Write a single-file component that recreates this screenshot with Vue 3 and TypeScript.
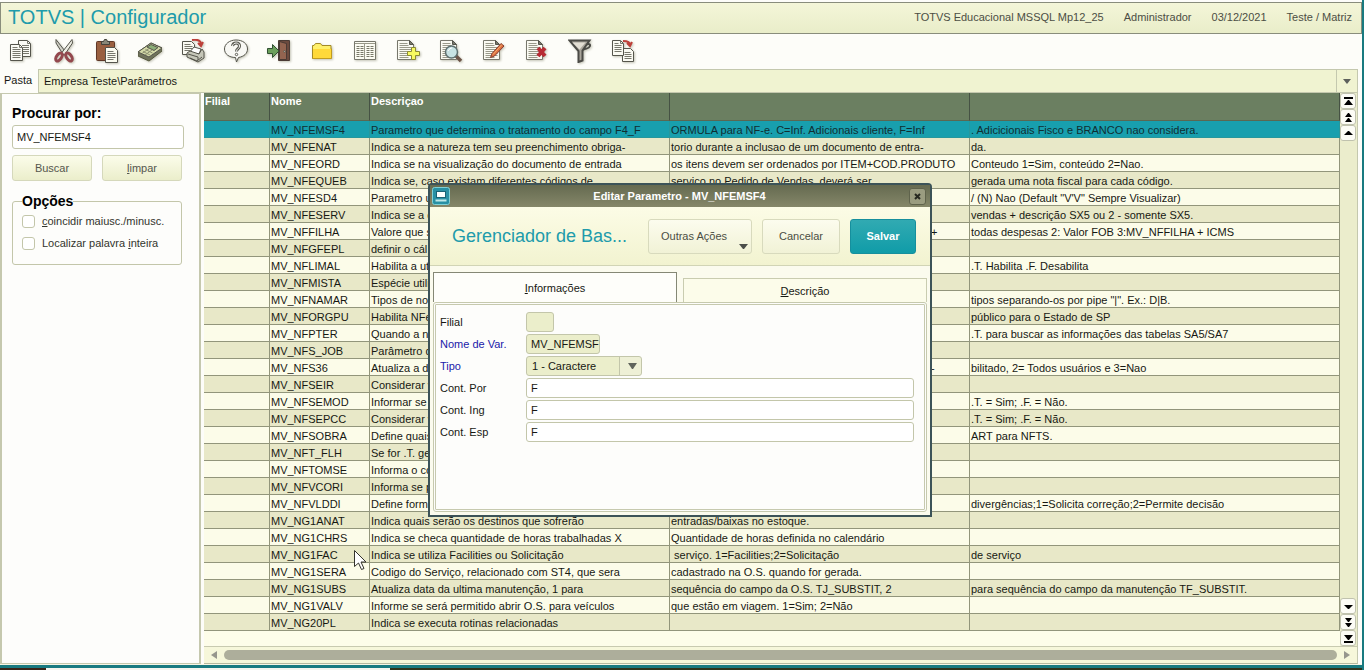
<script setup lang="ts">
import { ref } from 'vue'

interface Row {
  name: string
  desc: string
  desc2: string
  desc3: string
  tail?: boolean
}

const r = (name: string, desc: string, desc2 = '', desc3 = '', tail = false): Row => ({ name, desc, desc2, desc3, tail })

const rows: Row[] = [
  r('MV_NFEMSF4', 'Parametro que determina o tratamento do campo F4_F', 'ORMULA para NF-e. C=Inf. Adicionais cliente, F=Inf', '. Adicicionais Fisco e BRANCO nao considera.'),
  r('MV_NFENAT', 'Indica se a natureza tem seu preenchimento obriga-', 'torio durante a inclusao de um documento de entra-', 'da.'),
  r('MV_NFEORD', 'Indica se na visualização do documento de entrada', 'os itens devem ser ordenados por ITEM+COD.PRODUTO', 'Conteudo 1=Sim, conteúdo 2=Nao.'),
  r('MV_NFEQUEB', 'Indica se, caso existam diferentes códigos de', 'serviço no Pedido de Vendas, deverá ser', 'gerada uma nota fiscal para cada código.'),
  r('MV_NFESD4', 'Parametro u', '', '/ (N) Nao (Default "V\'V" Sempre Visualizar)'),
  r('MV_NFESERV', 'Indica se a d', '', 'vendas + descrição SX5 ou 2 - somente SX5.'),
  r('MV_NFFILHA', 'Valore que s', '+', 'todas despesas 2: Valor FOB 3:MV_NFFILHA + ICMS', true),
  r('MV_NFGFEPL', 'definir o cál'),
  r('MV_NFLIMAL', 'Habilita a uti', '', '.T. Habilita .F. Desabilita'),
  r('MV_NFMISTA', 'Espécie utili'),
  r('MV_NFNAMAR', 'Tipos de not', '', 'tipos separando-os por pipe "|". Ex.: D|B.'),
  r('MV_NFORGPU', 'Habilita NFe', '', 'público para o Estado de SP'),
  r('MV_NFPTER', 'Quando a n', '', '.T. para buscar as informações das tabelas SA5/SA7'),
  r('MV_NFS_JOB', 'Parâmetro d'),
  r('MV_NFS36', 'Atualiza a d', '-', 'bilitado, 2= Todos usuários e 3=Nao', true),
  r('MV_NFSEIR', 'Considerar v'),
  r('MV_NFSEMOD', 'Informar se', '', '.T. = Sim; .F. = Não.'),
  r('MV_NFSEPCC', 'Considerar v', '', '.T. = Sim; .F. = Não.'),
  r('MV_NFSOBRA', 'Define quais', '', 'ART para NFTS.'),
  r('MV_NFT_FLH', 'Se for .T. ge'),
  r('MV_NFTOMSE', 'Informa o có'),
  r('MV_NFVCORI', 'Informa se p'),
  r('MV_NFVLDDI', 'Define form', '', 'divergências;1=Solicita correção;2=Permite decisão'),
  r('MV_NG1ANAT', 'Indica quais serão os destinos que sofrerão', 'entradas/baixas no estoque.'),
  r('MV_NG1CHRS', 'Indica se checa quantidade de horas trabalhadas X', 'Quantidade de horas definida no calendário'),
  r('MV_NG1FAC', 'Indica se utiliza Facilities ou Solicitação', '\u00a0serviço. 1=Facilities;2=Solicitação', 'de serviço'),
  r('MV_NG1SERA', 'Codigo do Serviço, relacionado com ST4, que sera', 'cadastrado na O.S. quando for gerada.'),
  r('MV_NG1SUBS', 'Atualiza data da ultima manutenção, 1 para', 'sequência do campo da O.S. TJ_SUBSTIT, 2', 'para sequência do campo da manutenção TF_SUBSTIT.'),
  r('MV_NG1VALV', 'Informe se será permitido abrir O.S. para veículos', 'que estão em viagem. 1=Sim; 2=Não'),
  r('MV_NG20PL', 'Indica se executa rotinas relacionadas'),
]

const selected = ref(0)
const search = ref('MV_NFEMSF4')
const matchCase = ref(false)
const wholeWord = ref(false)
const branch = ref('')
const variable = ref('MV_NFEMSF')
const kind = ref('1 - Caractere')
const contents = ref([
  { id: 'por', label: 'Cont. Por', value: 'F' },
  { id: 'ing', label: 'Cont. Ing', value: 'F' },
  { id: 'esp', label: 'Cont. Esp', value: 'F' },
])

const tools = ['copy', 'cut', 'paste', 'calc', 'print', 'help', 'exit', 'folder', 'grid', 'add', 'view', 'edit', 'delete', 'filter', 'export']
const pageTools = ['add', 'view', 'edit', 'delete']
</script>

<template>
  <div class="app">
    <header class="brand">
      <h1>TOTVS | Configurador</h1>
      <div class="status">
        <span>TOTVS Educacional MSSQL Mp12_25</span>
        <span>Administrador</span>
        <span>03/12/2021</span>
        <span>Teste / Matriz</span>
      </div>
    </header>

    <nav class="toolbar">
      <button v-for="t in tools" :key="t" type="button" class="tool" :aria-label="t">
        <svg viewBox="0 0 24 24" width="24" height="24" fill="none" stroke="#55554c" stroke-width="1">
          <template v-if="t === 'copy'">
            <path d="M9.500 1.500h9l3 3v13h-12z" fill="#fafaf4" />
            <path d="M18.500 1.500v3h3M13 6.500h7M13 8.500h7M13 10.500h7M13 12.500h7M13 14.500h7" stroke="#77776c" />
            <path d="M1.500 5.500h9l3 3v13h-12z" fill="#fafaf4" />
            <path d="M10.500 5.500v3h3M3.500 8.500h5M3.500 10.500h8M3.500 12.500h8M3.500 14.500h8M3.500 16.500h8M3.500 18.500h8" stroke="#77776c" />
          </template>
          <template v-else-if="t === 'cut'">
            <path d="M4 .5L14.500 14l-3 2L4 4z" fill="#d0d0c6" />
            <path d="M20 .5L9.500 14l3 2L20.500 4z" fill="#eeeee4" />
            <ellipse cx="7" cy="18" rx="2.500" ry="4.500" transform="rotate(35 7 18)" stroke="#94484e" stroke-width="3" />
            <ellipse cx="17" cy="18" rx="2.500" ry="4.500" transform="rotate(-35 17 18)" stroke="#94484e" stroke-width="3" />
          </template>
          <template v-else-if="t === 'paste'">
            <rect x="1.500" y="2.500" width="18" height="19" rx="1" fill="#9a6040" stroke="#603828" />
            <path d="M6.500 5.500v-3h2l1-2h2l1 2h2v3z" fill="#888878" stroke="#44443c" />
            <path d="M10.500 8.500h9l3 3v12h-12z" fill="#fcfcf0" />
            <path d="M12.500 12.500h6M12.500 14.500h8M12.500 16.500h8M12.500 18.500h8M12.500 20.500h6" stroke="#77776c" />
          </template>
          <template v-else-if="t === 'calc'">
            <path d="M0 13L13 4l11 5v3L11 22 0 17z" fill="#70735c" stroke="#55583e" />
            <path d="M0 13L13 4l11 5-13 9z" fill="#d3d9a8" />
            <path d="M9 8l4-2.500 7 3-4 3z" fill="#8caf78" />
            <path d="M5 12.500l7 3.500M7.500 10.500l7 3.500M4 14.500l7-5M7 16l7-5" stroke="#8d9272" />
          </template>
          <template v-else-if="t === 'print'">
            <path d="M1.500 2.500h9l3 3v10h-12z" fill="#fafaf2" />
            <path d="M3.500 5.500h6M3.500 7.500h8M3.500 9.500h8M3.500 11.500h6" stroke="#77776c" />
            <path d="M11 1c6-1 9 1 9 4M17 4l3 3 2-4" stroke="#bd403a" stroke-width="2" />
            <path d="M8 14l5-6 7 2-2 5z" fill="#fff" />
            <path d="M6 14l3-2 9 3 3-5 2 3v6l-6 4L6 18z" fill="#c5c6b8" />
            <path d="M7 15l10 3v3M9 19l7 3 5-4" />
          </template>
          <template v-else-if="t === 'help'">
            <path d="M12 1c6.500 0 11.500 3.500 11.500 9 0 4.500-3.500 7.500-9 8.500L12.500 23l-1-4.500C5 18.500.5 15 .5 10S5.500 1 12 1z" fill="#f8f8f4" />
            <path d="M8.500 7c.5-4 7-4 7 0 0 3-3 2.500-3 5.500" stroke="#55554c" stroke-width="3" />
            <path d="M8.500 7c.5-4 7-4 7 0 0 3-3 2.500-3 5.500" stroke="#fff" />
            <circle cx="12.500" cy="15.500" r="1.200" fill="#fff" />
          </template>
          <template v-else-if="t === 'exit'">
            <path d="M11.500 1.500h11v20h-11z" fill="#6c4a3e" stroke="#4a3a34" />
            <path d="M12.500 2.500l7 2v16h-7z" fill="#936450" stroke="#4a3a34" />
            <circle cx="17.500" cy="12.500" r=".8" fill="#ffe" />
            <path d="M.5 9.500h5v-4l6.500 6.500-6.500 6.500v-4h-5z" fill="#6b9f5c" stroke="#315132" />
          </template>
          <template v-else-if="t === 'folder'">
            <path d="M2.500 19.500v-13h1.500l1.500-2h5l1.500 2h9v13z" fill="#fff06a" stroke="#a38a28" />
            <path d="M3 10h18v9H3z" fill="#ffd93a" stroke="none" />
            <path d="M2.500 19.500h19v-10" stroke="#c19c20" />
          </template>
          <template v-else-if="t === 'grid'">
            <path d="M1.500 2.500h21v18h-21z" fill="#fbfbf2" stroke="#77776c" />
            <path d="M2 4.500h20" stroke="#99998a" />
            <path d="M3.500 7.500h7M13.500 7.500h7M3.500 9.500h7M13.500 9.500h7M3.500 11.500h7M13.500 11.500h7M3.500 13.500h7M13.500 13.500h7M3.500 15.500h7M13.500 15.500h7M3.500 17.500h7M13.500 17.500h7" stroke="#777768" stroke-dasharray="3 1" />
            <path d="M11.500 5v15" stroke="#99998a" />
          </template>
          <template v-else-if="pageTools.includes(t)">
            <path d="M1.500 1.500h12l4 4v15h-16z" fill="#fafaf2" stroke="#77776c" />
            <path d="M13.500 1.500v4h4z" fill="#77776c" />
            <path d="M3.500 4.500h8M3.500 6.500h9M3.500 8.500h12M3.500 10.500h12M3.500 12.500h12M3.500 14.500h12M3.500 16.500h12M3.500 18.500h9" stroke="#99998a" />
            <path v-if="t === 'add'" d="M15.500 8.500h4v4h4v4h-4v4h-4v-4h-4v-4h4z" fill="#f7fa60" stroke="#8a8a34" />
            <template v-if="t === 'view'">
              <path d="M16 16l6 6" stroke="#6d5548" stroke-width="3.500" />
              <circle cx="12.500" cy="13" r="6" fill="#c8e3e4" stroke="#5f7070" stroke-width="1.500" />
              <path d="M9 12c1-2 3-3 4-3" stroke="#fff" />
            </template>
            <template v-if="t === 'edit'">
              <path d="M8.500 18.500l1.500-4L19 4.500l3 2.500-9.500 10z" fill="#df7042" stroke="#874030" />
              <path d="M11 15.500l9-10" stroke="#f4b06c" />
            </template>
            <path v-if="t === 'delete'" d="M13 9l7 8M20 9l-7 8" stroke="#b72b34" stroke-width="4" />
          </template>
          <template v-else-if="t === 'filter'">
            <path d="M16 9c1-5 7-5 6-2-1 3-4 2-7 4" stroke="#4b4b46" stroke-width="2" />
            <path d="M1.500 1.500h20l-7 10v10l-4 1.500V12z" fill="#aaa69c" stroke="#4b4b46" stroke-width="2" />
            <path d="M4.500 3.500h13l-6 7z" fill="#e2ded3" stroke="none" />
          </template>
          <template v-else>
            <path d="M11.500 9.500h8l3 3v10h-11z" fill="#fafaf2" />
            <path d="M13.500 13.500h6M13.500 15.500h7M13.500 17.500h7M13.500 19.500h7" stroke="#77776c" />
            <path d="M1.500 1.500h8l3 3v12h-11z" fill="#fafaf2" />
            <path d="M9.500 1.500v3h3M3.500 4.500h4M3.500 6.500h7M3.500 8.500h7M3.500 10.500h7M3.500 12.500h7" stroke="#77776c" />
            <path d="M12 2c5 0 7 1 7 4M16 4l3 3 2-4" stroke="#bd403a" stroke-width="2" />
          </template>
        </svg>
      </button>
    </nav>

    <div class="folders">
      <span class="folder-label">Pasta</span>
      <button type="button" class="folder-path"><span>Empresa Teste\Parâmetros</span></button>
      <button type="button" class="folder-menu" aria-label="Pastas">
        <svg viewBox="0 0 8 5" width="8" height="5"><path d="M0 0h8L4 5z" fill="#5d605c" /></svg>
      </button>
    </div>

    <main class="work">
      <aside class="side">
        <label class="heading" for="search">Procurar por:</label>
        <input id="search" v-model="search" class="search" type="text" />
        <div class="actions">
          <button type="button" class="btn">Buscar</button>
          <button type="button" class="btn"><u>l</u>impar</button>
        </div>
        <fieldset class="options">
          <legend>Opções</legend>
          <label><input v-model="matchCase" type="checkbox" /><span><u>c</u>oincidir maiusc./minusc.</span></label>
          <label><input v-model="wholeWord" type="checkbox" /><span>Localizar palavra <u>i</u>nteira</span></label>
        </fieldset>
      </aside>

      <section class="browse">
        <div class="browse-body">
          <div class="table-area">
            <table>
              <colgroup><col class="c-branch" /><col class="c-name" /><col class="c-desc" /><col class="c-desc" /><col /></colgroup>
              <thead>
                <tr><th>Filial</th><th>Nome</th><th>Descriçao</th><th></th><th></th></tr>
              </thead>
              <tbody>
                <tr v-for="(row, i) in rows" :key="row.name" :class="{ selected: i === selected }" @click="selected = i">
                  <td></td>
                  <td>{{ row.name }}</td>
                  <td>{{ row.desc }}</td>
                  <td :class="{ tail: row.tail }">{{ row.desc2 }}</td>
                  <td>{{ row.desc3 }}</td>
                </tr>
              </tbody>
            </table>
          </div>
          <div class="vscroll">
            <button type="button" aria-label="Início"><svg viewBox="0 0 9 9" width="9" height="9"><path d="M0 0h9v2H0zM4 3h1l4 5H0z" /></svg></button>
            <button type="button" aria-label="Página anterior"><svg viewBox="0 0 9 9" width="9" height="9"><path d="M4 0h1l3 4H1zM4 5h1l3 4H1z" /></svg></button>
            <button type="button" aria-label="Linha anterior"><svg viewBox="0 0 9 9" width="9" height="9"><path d="M4 2h1l4 4H0z" /></svg></button>
            <span class="track"></span>
            <button type="button" aria-label="Próxima linha"><svg viewBox="0 0 9 9" width="9" height="9"><path d="M0 3h9L5 7H4z" /></svg></button>
            <button type="button" aria-label="Próxima página"><svg viewBox="0 0 9 9" width="9" height="9"><path d="M1 0h7L5 4H4zM1 5h7L5 9H4z" /></svg></button>
            <button type="button" aria-label="Fim"><svg viewBox="0 0 9 9" width="9" height="9"><path d="M0 1h9L5 6H4zM0 7h9v2H0z" /></svg></button>
          </div>
        </div>
        <div class="hscroll">
          <button type="button" aria-label="Rolar à esquerda"><svg viewBox="0 0 6 8" width="6" height="8"><path d="M6 0v8L0 4z" fill="#96968c" /></svg></button>
          <span class="thumb"></span>
          <button type="button" aria-label="Rolar à direita"><svg viewBox="0 0 6 8" width="6" height="8"><path d="M0 0v8l6-4z" fill="#96968c" /></svg></button>
        </div>
      </section>
    </main>
    <footer class="edge"><span class="strip"></span></footer>

    <svg class="cursor" viewBox="0 0 13 20" width="13" height="20"><path d="M.5.500v16l4-3.500 3 6.500 2.500-1-3-6.500h5z" fill="#fff" stroke="#33332c" /></svg>

    <div class="overlay">
      <section class="dialog" role="dialog" aria-labelledby="dialog-title">
        <div class="titlebar">
          <svg viewBox="0 0 18 18" width="18" height="18">
            <rect x=".5" y=".5" width="17" height="17" rx="2" fill="#2790a4" stroke="#7ed0d6" />
            <rect x="4.500" y="4.500" width="9" height="6" fill="#f8ffff" stroke="#176275" />
            <path d="M3.500 13.500h11" stroke="#bfe8e8" stroke-width="2" />
          </svg>
          <h2 id="dialog-title">Editar Parametro - MV_NFEMSF4</h2>
          <button type="button" aria-label="Fechar"><svg viewBox="0 0 7 7" width="7" height="7"><path d="M1 1l5 5M6 1L1 6" stroke="#262820" stroke-width="2" /></svg></button>
        </div>
        <div class="dialog-head">
          <h3>Gerenciador de Bas...</h3>
          <button type="button" class="act more">Outras Ações
            <svg viewBox="0 0 9 5" width="9" height="5"><path d="M0 0h9L5 5H4z" fill="#4b4e4a" /></svg>
          </button>
          <button type="button" class="act cancel">Cancelar</button>
          <button type="button" class="act save">Salvar</button>
        </div>
        <div class="tabs" role="tablist">
          <button type="button" role="tab" aria-selected="true" class="tab active"><span><u>I</u>nformações</span></button>
          <button type="button" role="tab" aria-selected="false" class="tab"><span><u>D</u>escrição</span></button>
        </div>
        <form class="panel" @submit.prevent>
          <div class="field"><label for="branch">Filial</label><input id="branch" v-model="branch" class="locked w-branch" type="text" readonly /></div>
          <div class="field required"><label for="variable">Nome de Var.</label><input id="variable" v-model="variable" class="locked w-var" type="text" readonly /></div>
          <div class="field required">
            <label for="kind">Tipo</label>
            <span class="picker">
              <select id="kind" v-model="kind"><option>1 - Caractere</option></select>
              <svg viewBox="0 0 9 6" width="9" height="6"><path d="M0 0h9L5 6H4z" fill="#60645c" /></svg>
            </span>
          </div>
          <div v-for="c in contents" :key="c.id" class="field"><label :for="c.id">{{ c.label }}</label><input :id="c.id" v-model="c.value" class="wide" type="text" /></div>
        </form>
      </section>
    </div>
  </div>
</template>

<style>
body { margin: 0; background: #fdfdf9; }
</style>

<style scoped>
.app, .app * { box-sizing: border-box; }
.app {
  position: relative;
  display: flex;
  flex-direction: column;
  min-height: 100vh;
  overflow: hidden;
  border-right: 2px solid #187a80;
  padding-top: 2px;
  font-family: "Liberation Sans", Arial, sans-serif;
  font-size: 11px;
  color: #171812;
}
button, input, select { font: inherit; color: inherit; margin: 0; padding: 0; outline: none; }
button { display: flex; align-items: center; justify-content: center; }
h1, h2, h3 { margin: 0; }

.brand {
  display: flex;
  align-items: center;
  justify-content: space-between;
  height: 32px;
  padding: 0 9px 2px 7px;
  border: 1px solid #898d7c;
  background: linear-gradient(#f4f6d8, #e9edc9);
}
.brand h1 { font-size: 20px; font-weight: normal; color: #209bab; }
.status { display: flex; gap: 20px; color: #4c4e44; }

.toolbar { display: flex; align-items: center; gap: 19px; height: 35px; padding: 0 0 2px 9px; }
.tool { width: 24px; height: 24px; border: 0; background: none; filter: drop-shadow(1px 1px 1px #c4c4b6); }

.folders { display: flex; height: 24px; padding-right: 4px; }
.folder-label { width: 38px; padding-left: 4px; line-height: 22px; }
.folder-path { flex: 1; justify-content: flex-start; padding-left: 5px; border: 1px solid #c4c8ae; border-width: 1px 0 1px 1px; background: #f0f3d1; }
.folder-menu { width: 22px; border: 1px solid #c4c8ae; background: #f0f3d1; }

.work { display: flex; flex: 1; padding-right: 4px; gap: 3px; }
.side {
  width: 201px;
  padding: 11px 15px 0 10px;
  border: 1px solid #c5c8ae;
  border-width: 1px 2px 1px 2px;
  background: #fdfdfb;
}
.heading { display: block; font-size: 14px; font-weight: bold; line-height: 16px; color: #000; }
.search { width: 100%; height: 24px; margin-top: 4px; padding: 0 4px; border: 1px solid #c3c6aa; border-radius: 3px; background: #fff; }
.actions { display: flex; gap: 10px; margin: 6px 2px 12px 0; }
.btn { flex: 1; height: 26px; border: 1px solid #d5d8bb; border-radius: 3px; background: linear-gradient(#fbfcea, #ebeecb); color: #55574d; }
.options { height: 72px; margin: 0 2px 0 0; padding: 1px 9px 0; border: 1px solid #c3c6aa; border-radius: 3px; }
.options legend { padding: 0; font-size: 14px; font-weight: bold; line-height: 16px; color: #000; }
.options label { display: flex; align-items: center; gap: 7px; height: 22px; color: #33352d; }
.options input { appearance: none; width: 13px; height: 13px; border: 1px solid #c3c6aa; border-radius: 3px; background: #fff; }

.browse { display: flex; flex: 1; flex-direction: column; min-width: 0; border-right: 1px solid #c4c8ae; border-bottom: 1px solid #b6b99f; background: #fdfde9; }
.browse-body { display: flex; flex: 1; }
.table-area { flex: 1; min-width: 0; overflow: hidden; }
table { width: 100%; table-layout: fixed; border-collapse: separate; border-spacing: 0; }
.c-branch { width: 66px; }
.c-name { width: 100px; }
.c-desc { width: 300px; }
th { height: 28px; padding: 2px 1px; border-right: 1px solid #465244; border-bottom: 1px solid #5a6852; background: #6b7f61; color: #fff; text-align: left; vertical-align: top; }
td { height: 17px; padding: 2px 1px 0; border-right: 1px solid #92957b; border-bottom: 1px solid #92957b; background: #fcfce9; line-height: 14px; white-space: nowrap; overflow: hidden; }
tr:nth-child(even) td { background: #e8e8c8; }
tr.selected td { border-color: #26979d; background: #189fae; color: #102e32; }
td.tail { padding-left: 261px; }

.vscroll { display: flex; flex-direction: column; width: 17px; background: #ebedcc; }
.vscroll button { width: 16px; height: 16px; border: 1px solid #c0c2ae; border-radius: 3px; background: #fcfcf5; }
.track { flex: 1; }
.hscroll { display: flex; align-items: center; height: 17px; border-top: 1px solid #c8cab0; background: #f6f7da; }
.hscroll button { width: 20px; height: 14px; border: 0; background: none; }
.thumb { flex: 1; height: 10px; border-radius: 5px; background: #adae9b; }

.edge { height: 6px; border-top: 1px solid #f6f6e4; background: #187a80; padding-top: 3px; }
.strip { display: block; height: 2px; background: linear-gradient(90deg, #3a2518 0 46px, #f5f5ee 46px 390px, #2f341c 390px); }
.cursor { position: absolute; left: 354px; top: 550px; }

.overlay { position: fixed; inset: 0; display: flex; align-items: center; justify-content: center; padding-top: 30px; padding-right: 4px; }
.dialog {
  display: flex;
  flex-direction: column;
  width: 504px;
  height: 334px;
  padding: 0 3px 3px;
  border: 2px solid #3c5358;
  border-radius: 4px 4px 0 0;
  background: #fbfbee;
}
.titlebar { display: flex; align-items: center; height: 22px; margin: 0 -3px; padding: 0 4px 0 2px; background: linear-gradient(#656a50, #858769); }
.titlebar h2 { flex: 1; font-size: 11px; color: #fff; text-align: center; }
.titlebar button { width: 17px; height: 17px; border: 1px solid #5f634c; border-radius: 3px; background: #9a9c80; }
.dialog-head { display: flex; align-items: center; gap: 10px; height: 59px; margin: 0 -3px; padding: 2px 14px 2px 22px; border-bottom: 1px solid #d1d4b5; background: linear-gradient(#fcfce6, #f2f3d0); }
.dialog-head h3 { flex: 1; font-size: 18px; font-weight: normal; color: #209bab; white-space: nowrap; }
.act { height: 35px; border: 1px solid #d8dabd; border-radius: 3px; background: linear-gradient(#fcfcee, #f1f2d6); color: #4b4e44; }
.more { position: relative; width: 104px; padding-right: 12px; }
.more svg { position: absolute; right: 3px; bottom: 4px; }
.cancel { width: 78px; }
.save { width: 66px; border-color: #168f9d; background: linear-gradient(#31aab2, #109ca8); color: #fff; font-weight: bold; }
.tabs { display: flex; align-items: flex-end; gap: 6px; height: 36px; }
.tab { flex: 1; height: 24px; border: 1px solid #c9ccb0; border-bottom: 0; background: #fcfcea; }
.tab.active { height: 30px; border-color: #858875; background: #fefefa; }
.panel { flex: 1; padding: 6px 10px 0 4px; border: 3px double #c6c9ae; border-radius: 3px; background: #fdfdfb; }
.field { display: flex; align-items: center; height: 22px; }
.field label { flex: 0 0 86px; }
.required label { color: #2020aa; }
.field input, .field select { height: 20px; padding: 0 0 0 4px; border: 1px solid #c3c6aa; border-radius: 3px; background: #fff; }
.field .wide { flex: 1; min-width: 0; }
.field .locked, .field select { background: #ebeecb; }
.w-branch { width: 28px; }
.w-var { width: 74px; }
.picker { position: relative; width: 116px; }
.field .picker select { display: block; width: 100%; appearance: none; padding-left: 5px; background: linear-gradient(90deg, #ebeecb 0 92px, #c3c6aa 92px 93px, #eef0d6 93px); }
.picker svg { position: absolute; right: 5px; top: 7px; pointer-events: none; }
</style>
